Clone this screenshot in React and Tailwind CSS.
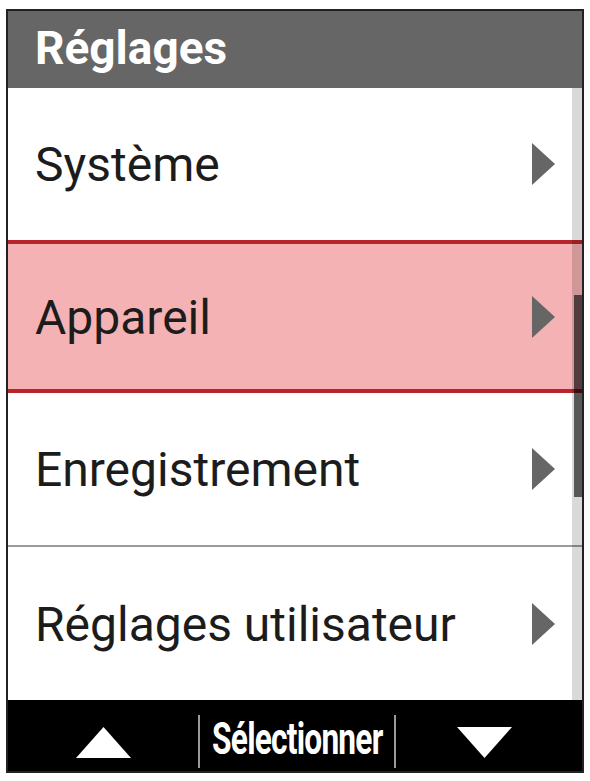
import { Fragment } from 'react'

const items = [
  { label: 'Système', h: 'h-[152px]' },
  { label: 'Appareil', h: 'h-[145px]', selected: true },
  { label: 'Enregistrement', h: 'h-[152px]' },
  { label: 'Réglages utilisateur', h: 'h-[153px]' }
]

const Chevron = () => (
  <svg width="23" height="42" viewBox="0 0 23 42" className="shrink-0">
    <polygon points="0,0 23,21 0,42" fill="#666666" />
  </svg>
)

const Row = ({ label, h, selected }) => (
  <div className={`${h} flex items-center justify-between pl-[27px] pr-[27px] ${selected ? 'bg-[#f5b2b4]' : 'bg-white'}`}>
    <span className="text-[48px] leading-none text-[#1c1c1c] mt-[2px]">{label}</span>
    <Chevron />
  </div>
)

const App = () => {
  return (
    <div className="w-[590px] h-[781px] bg-white pt-[9px] pl-[6px]" style={{ fontFamily: 'Roboto, "Noto Sans", sans-serif' }}>
      <div className="w-[578px] border-2 border-[#222] flex flex-col">
        <div className="h-[77px] bg-[#666666] flex items-center pl-[27px]">
          <span className="text-[46px] font-bold text-white leading-none -mt-1">Réglages</span>
        </div>

        <div className="relative">
          {items.map((it, i) => (
            <Fragment key={it.label}>
              {i === 1 && <div className="h-[4px] bg-[#b8242c]" />}
              {i === 2 && <div className="h-[4px] bg-[#b8242c]" />}
              {i === 3 && <div className="h-[2px] bg-[#9a9a9a]" />}
              <Row {...it} />
            </Fragment>
          ))}

          {/* scrollbar */}
          <div className="absolute top-0 bottom-0 right-0 w-[10px] bg-black/15">
            <div className="absolute right-0 top-[207px] h-[202px] w-[8px] bg-black/60" />
          </div>
        </div>

        <div className="h-[71px] bg-black flex items-start">
          <div className="w-[190px] flex justify-center pt-[27px]">
            <svg width="55" height="31" viewBox="0 0 55 31">
              <polygon points="27.5,0 55,31 0,31" fill="#ffffff" />
            </svg>
          </div>
          <div className="w-[2px] h-[53px] bg-[#9a9a9a] mt-[15px]" />
          <div className="w-[194px] flex justify-center pt-[17px]">
            <span className="text-[44px] font-bold text-white leading-none scale-x-[0.72] tracking-tight whitespace-nowrap">Sélectionner</span>
          </div>
          <div className="w-[2px] h-[53px] bg-[#9a9a9a] mt-[15px]" />
          <div className="flex-1 flex justify-center pr-[10px] pt-[27px]">
            <svg width="55" height="31" viewBox="0 0 55 31">
              <polygon points="0,0 55,0 27.5,31" fill="#ffffff" />
            </svg>
          </div>
        </div>
      </div>
    </div>
  )
}

export default App
